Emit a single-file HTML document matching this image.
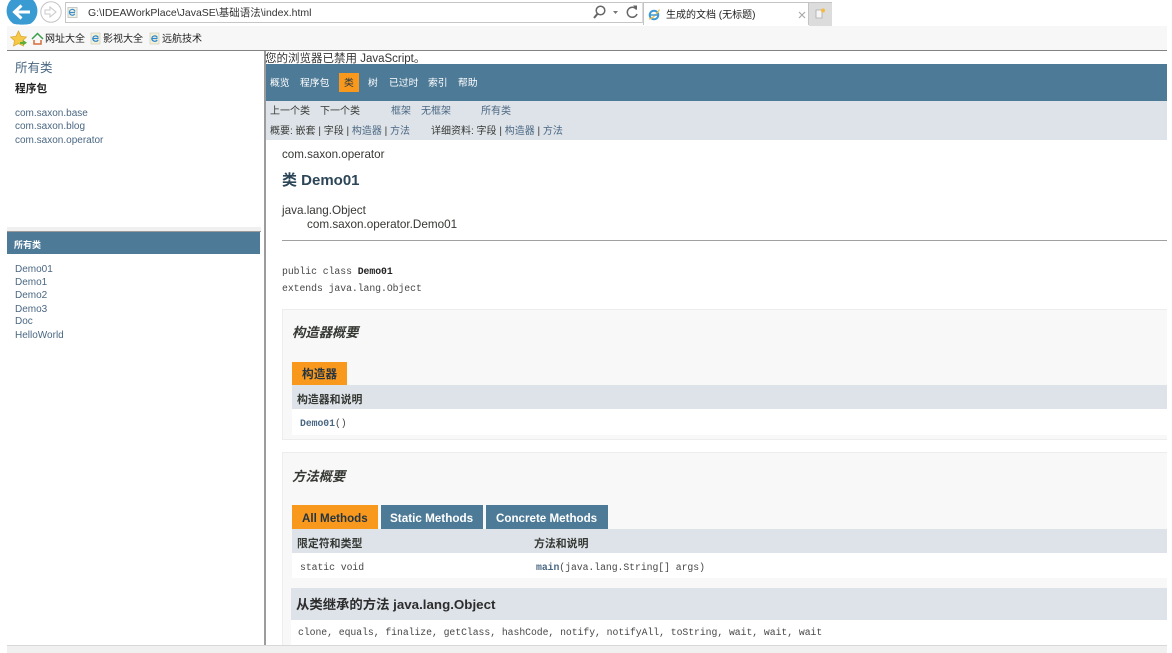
<!DOCTYPE html>
<html lang="zh"><head><meta charset="utf-8"><title>生成的文档 (无标题)</title>
<style>
html,body{margin:0;padding:0;width:1172px;height:653px;overflow:hidden;background:#fff}
body{position:relative;font-family:"Liberation Sans","Noto Sans CJK SC",sans-serif;color:#353833;font-size:10.5px;filter:blur(.25px)}
.a,.t{position:absolute}
.t{white-space:nowrap;line-height:14px;margin-top:1px}
.l{color:#4a6782}
.w{color:#fff}
.m{font-family:"Liberation Mono","Noto Sans CJK SC",monospace;font-size:9.8px;color:#474747;letter-spacing:-.055px}
.b{font-weight:bold}
</style></head><body>
<!-- browser chrome -->
<div class="a" style="left:7px;top:26px;width:1160px;height:24px;background:#f7f7f7"></div>
<div class="a" style="left:7px;top:50px;width:1160px;height:1px;background:#828282"></div>
<svg class="a" style="left:0;top:0" width="70" height="26" viewBox="0 0 70 26">
<path d="M8.200 4A15.500 15.500 0 0 0 13 23.500C16 25 28 25 31 23.500A15.500 15.500 0 0 0 35.800 4C35 2 34 1 33 0H11C10 1 9 2 8.200 4Z" fill="#3a9bd2"/>
<path d="M14.500 12H30M21.500 5.500L14.500 12L21.500 18.500" fill="none" stroke="#fff" stroke-width="3"/>
<circle cx="51" cy="12" r="10.200" fill="#fff" stroke="#c4c4c4"/>
<path d="M45 10H50V7L56 12L50 17V14H45Z" fill="none" stroke="#c9c9c9" stroke-width="1"/>
</svg>
<div class="a" style="left:65px;top:2px;width:576px;height:19px;border:1px solid #c6c6c6;border-right:1px solid #dcdcdc;background:#fff"></div>
<svg class="a" style="left:67px;top:7px" width="12" height="12" viewBox="0 0 12 12"><rect x="1" y="0.500" width="9" height="10" fill="#f2f2e5" stroke="#c9c9c9"/><path d="M8 5.500H2.500A2.800 2.800 0 0 1 8 4.500M7.800 7A3 3 0 0 1 2.500 6" fill="none" stroke="#3d8fc9" stroke-width="1.200"/></svg>
<div class="t" style="left:88px;top:5px;font-size:10.500px;color:#333">G:\IDEAWorkPlace\JavaSE\基础语法\index.html</div>
<svg class="a" style="left:592px;top:4px" width="50" height="16" viewBox="0 0 50 16">
<circle cx="8.500" cy="6.500" r="4.300" fill="none" stroke="#666" stroke-width="1.500"/><path d="M5.500 9.800L2 14" stroke="#666" stroke-width="2"/>
<path d="M21 7H26L23.500 10Z" fill="#777"/>
<path d="M44.500 5.500A5 5 0 1 0 45 10" fill="none" stroke="#666" stroke-width="1.500"/><path d="M41 1.500L45 1.500V6Z" fill="#666"/>
</svg>
<div class="a" style="left:643px;top:2px;width:166px;height:23px;box-sizing:border-box;border:1px solid #c4c4c4;border-bottom:0;background:#fff"></div>
<div class="a" style="left:809px;top:2px;width:23px;height:24px;background:#dcdcdc;border-top:1px solid #c4c4c4;box-sizing:border-box"></div>
<svg class="a" style="left:647px;top:8px" width="14" height="14" viewBox="0 0 14 14"><circle cx="7" cy="7" r="4.300" fill="none" stroke="#3d9ad6" stroke-width="2"/><path d="M2 11C5 11 10 6 12.500 1.500" stroke="#f0c040" stroke-width="1.200" fill="none"/><path d="M3.500 7H10.500" stroke="#3d9ad6" stroke-width="1.500"/></svg>
<div class="t" style="left:666px;top:8px;font-size:10px;color:#222">生成的文档 (无标题)</div>
<svg class="a" style="left:798px;top:11px" width="8" height="8"><path d="M1 1L7 7M7 1L1 7" stroke="#aaa" stroke-width="1.200"/></svg>
<svg class="a" style="left:815px;top:8px" width="12" height="12" viewBox="0 0 12 12"><path d="M1 2H7V10H1Z" fill="#f5f5f5" stroke="#aaa" stroke-width="0.800"/><circle cx="8" cy="2.500" r="2" fill="#f5b942"/></svg>
<!-- favorites bar -->
<svg class="a" style="left:10px;top:30px" width="18" height="17" viewBox="0 0 18 17"><path d="M8.500 1L11 6.300L16.500 7L12.500 10.800L13.500 16L8.500 13.500L3.500 16L4.500 10.800L.5 7L6 6.300Z" fill="#f5c947" stroke="#d9a428" stroke-width=".7"/><path d="M10 12H13V10L17 12.800L13 15.500V14H10Z" fill="#5ab034"/></svg>
<svg class="a" style="left:31px;top:32px" width="13" height="13" viewBox="0 0 13 13"><path d="M1 7L6.500 1.500L12 7" fill="none" stroke="#3b9e49" stroke-width="1.500"/><path d="M3 8V12H10V8" fill="none" stroke="#d76b3c" stroke-width="1.500"/></svg>
<div class="t" style="left:45px;top:32px;font-size:10px;color:#222">网址大全</div>
<svg class="a" style="left:90px;top:32px" width="12" height="13" viewBox="0 0 12 13"><rect x="1" y="1" width="9" height="11" fill="#f4f1d8" stroke="#c8c8b8" stroke-width=".6"/><path d="M8.500 6.500H2.800A2.900 2.900 0 0 1 8.300 5.500M8.200 8A3 3 0 0 1 2.800 7" fill="none" stroke="#2d88cc" stroke-width="1.200"/></svg>
<div class="t" style="left:103px;top:32px;font-size:10px;color:#222">影视大全</div>
<svg class="a" style="left:149px;top:32px" width="12" height="13" viewBox="0 0 12 13"><rect x="1" y="1" width="9" height="11" fill="#f4f1d8" stroke="#c8c8b8" stroke-width=".6"/><path d="M8.500 6.500H2.800A2.900 2.900 0 0 1 8.300 5.500M8.200 8A3 3 0 0 1 2.800 7" fill="none" stroke="#2d88cc" stroke-width="1.200"/></svg>
<div class="t" style="left:162px;top:32px;font-size:10px;color:#222">远航技术</div>
<!-- left frames -->
<div class="t l" style="left:15px;top:60px;font-size:12.500px">所有类</div>
<div class="t b" style="left:15px;top:81px;font-size:10.700px;color:#222">程序包</div>
<div class="t l" style="left:15px;top:106px;font-size:10px">com.saxon.base</div>
<div class="t l" style="left:15px;top:119px;font-size:10px">com.saxon.blog</div>
<div class="t l" style="left:15px;top:133px;font-size:10px">com.saxon.operator</div>
<div class="a" style="left:7px;top:227px;width:254px;height:4px;background:#f0f0f0"></div>
<div class="a" style="left:7px;top:231px;width:254px;height:1px;background:#9a9a9a"></div>
<div class="a" style="left:7px;top:232px;width:253px;height:22px;background:#4d7a97"></div>
<div class="t w b" style="left:14px;top:237px;font-size:9px">所有类</div>
<div class="t l" style="left:15px;top:262px;font-size:10px">Demo01</div>
<div class="t l" style="left:15px;top:275px;font-size:10px">Demo1</div>
<div class="t l" style="left:15px;top:288px;font-size:10px">Demo2</div>
<div class="t l" style="left:15px;top:302px;font-size:10px">Demo3</div>
<div class="t l" style="left:15px;top:314px;font-size:10px">Doc</div>
<div class="t l" style="left:15px;top:328px;font-size:10px">HelloWorld</div>
<div class="a" style="left:264px;top:51px;width:1.500px;height:594px;background:#9c9c9c"></div>
<!-- main nav -->
<div class="t" style="left:265px;top:51px;font-size:11.500px;color:#333">您的浏览器已禁用 JavaScript。</div>
<div class="a" style="left:266px;top:64px;width:901px;height:37px;background:#4d7a97"></div>
<div class="a" style="left:339px;top:73px;width:20px;height:19px;background:#f8981d"></div>
<div class="t w" style="left:270px;top:76px;font-size:9.800px">概览</div>
<div class="t w" style="left:300px;top:76px;font-size:9.800px">程序包</div>
<div class="t" style="left:344px;top:76px;font-size:9.800px;color:#253441">类</div>
<div class="t w" style="left:368px;top:76px;font-size:9.800px">树</div>
<div class="t w" style="left:389px;top:76px;font-size:9.800px">已过时</div>
<div class="t w" style="left:428px;top:76px;font-size:9.800px">索引</div>
<div class="t w" style="left:458px;top:76px;font-size:9.800px">帮助</div>
<div class="a" style="left:266px;top:101px;width:901px;height:39px;background:#dee3e9"></div>
<div class="t" style="left:270px;top:104px;font-size:10px">上一个类</div>
<div class="t" style="left:320px;top:104px;font-size:10px">下一个类</div>
<div class="t l" style="left:391px;top:104px;font-size:10px">框架</div>
<div class="t l" style="left:421px;top:104px;font-size:10px">无框架</div>
<div class="t l" style="left:481px;top:104px;font-size:10px">所有类</div>
<div class="t" style="left:270px;top:124px;font-size:10px">概要: 嵌套 | 字段 | <span class="l">构造器</span> | <span class="l">方法</span></div>
<div class="t" style="left:431px;top:124px;font-size:10px">详细资料: 字段 | <span class="l">构造器</span> | <span class="l">方法</span></div>
<!-- header -->
<div class="t" style="left:282px;top:147px;font-size:11.600px">com.saxon.operator</div>
<div class="t b" style="left:282px;top:171px;font-size:15px;line-height:17px;color:#2c4557">类 Demo01</div>
<div class="t" style="left:282px;top:203px;font-size:11.700px">java.lang.Object</div>
<div class="t" style="left:307px;top:217px;font-size:11.700px">com.saxon.operator.Demo01</div>
<div class="a" style="left:282px;top:240px;width:885px;height:1px;background:#a0a0a0"></div>
<div class="t m" style="left:282px;top:264px">public class <b style="color:#222">Demo01</b></div>
<div class="t m" style="left:282px;top:281px">extends java.lang.Object</div>
<!-- constructor block -->
<div class="a" style="left:282px;top:309px;width:885px;height:131px;box-sizing:border-box;background:#f8f8f8;border:1px solid #ededed;border-right:0"></div>
<div class="t b" style="left:292px;top:325px;font-size:13.300px;font-style:italic;color:#353833">构造器概要</div>
<div class="a" style="left:292px;top:362px;width:55px;height:24px;background:#f8981d"></div>
<div class="t b" style="left:302px;top:367px;font-size:11.700px;color:#253441">构造器</div>
<div class="a" style="left:292px;top:385px;width:875px;height:24px;background:#dee3e9"></div>
<div class="t b" style="left:297px;top:392px;font-size:10.900px">构造器和说明</div>
<div class="a" style="left:292px;top:409px;width:875px;height:26px;background:#fff"></div>
<div class="t m" style="left:300px;top:416px"><b class="l">Demo01</b>()</div>
<!-- method block -->
<div class="a" style="left:282px;top:452px;width:885px;height:193px;box-sizing:border-box;background:#f8f8f8;border:1px solid #ededed;border-right:0;border-bottom:0"></div>
<div class="t b" style="left:292px;top:469px;font-size:13.300px;font-style:italic;color:#353833">方法概要</div>
<div class="a" style="left:292px;top:505px;width:86px;height:24px;background:#f8981d"></div>
<div class="t b" style="left:302px;top:511px;font-size:11.600px;color:#253441">All Methods</div>
<div class="a" style="left:381px;top:505px;width:102px;height:24px;background:#4d7a97"></div>
<div class="t b w" style="left:390px;top:511px;font-size:11.700px">Static Methods</div>
<div class="a" style="left:486px;top:505px;width:122px;height:24px;background:#4d7a97"></div>
<div class="t b w" style="left:496px;top:511px;font-size:11.600px">Concrete Methods</div>
<div class="a" style="left:292px;top:529px;width:875px;height:24px;background:#dee3e9"></div>
<div class="t b" style="left:297px;top:536px;font-size:10.900px">限定符和类型</div>
<div class="t b" style="left:534px;top:536px;font-size:10.900px">方法和说明</div>
<div class="a" style="left:292px;top:553px;width:875px;height:25px;background:#fff"></div>
<div class="t m" style="left:300px;top:560px">static void</div>
<div class="t m" style="left:536px;top:560px"><b class="l">main</b>(java.lang.String[] args)</div>
<div class="a" style="left:291px;top:588px;width:876px;height:32px;background:#dee3e9"></div>
<div class="t b" style="left:296px;top:597px;font-size:13.350px;color:#2c2c2c">从类继承的方法 java.lang.Object</div>
<div class="a" style="left:291px;top:620px;width:876px;height:25px;background:#fff"></div>
<div class="t m" style="left:298px;top:625px">clone, equals, finalize, getClass, hashCode, notify, notifyAll, toString, wait, wait, wait</div>
<!-- bottom bar -->
<div class="a" style="left:7px;top:645px;width:1160px;height:1px;background:#d8d8d8"></div>
<div class="a" style="left:7px;top:646px;width:1160px;height:7px;background:#f0f0f0"></div>
</body></html>
